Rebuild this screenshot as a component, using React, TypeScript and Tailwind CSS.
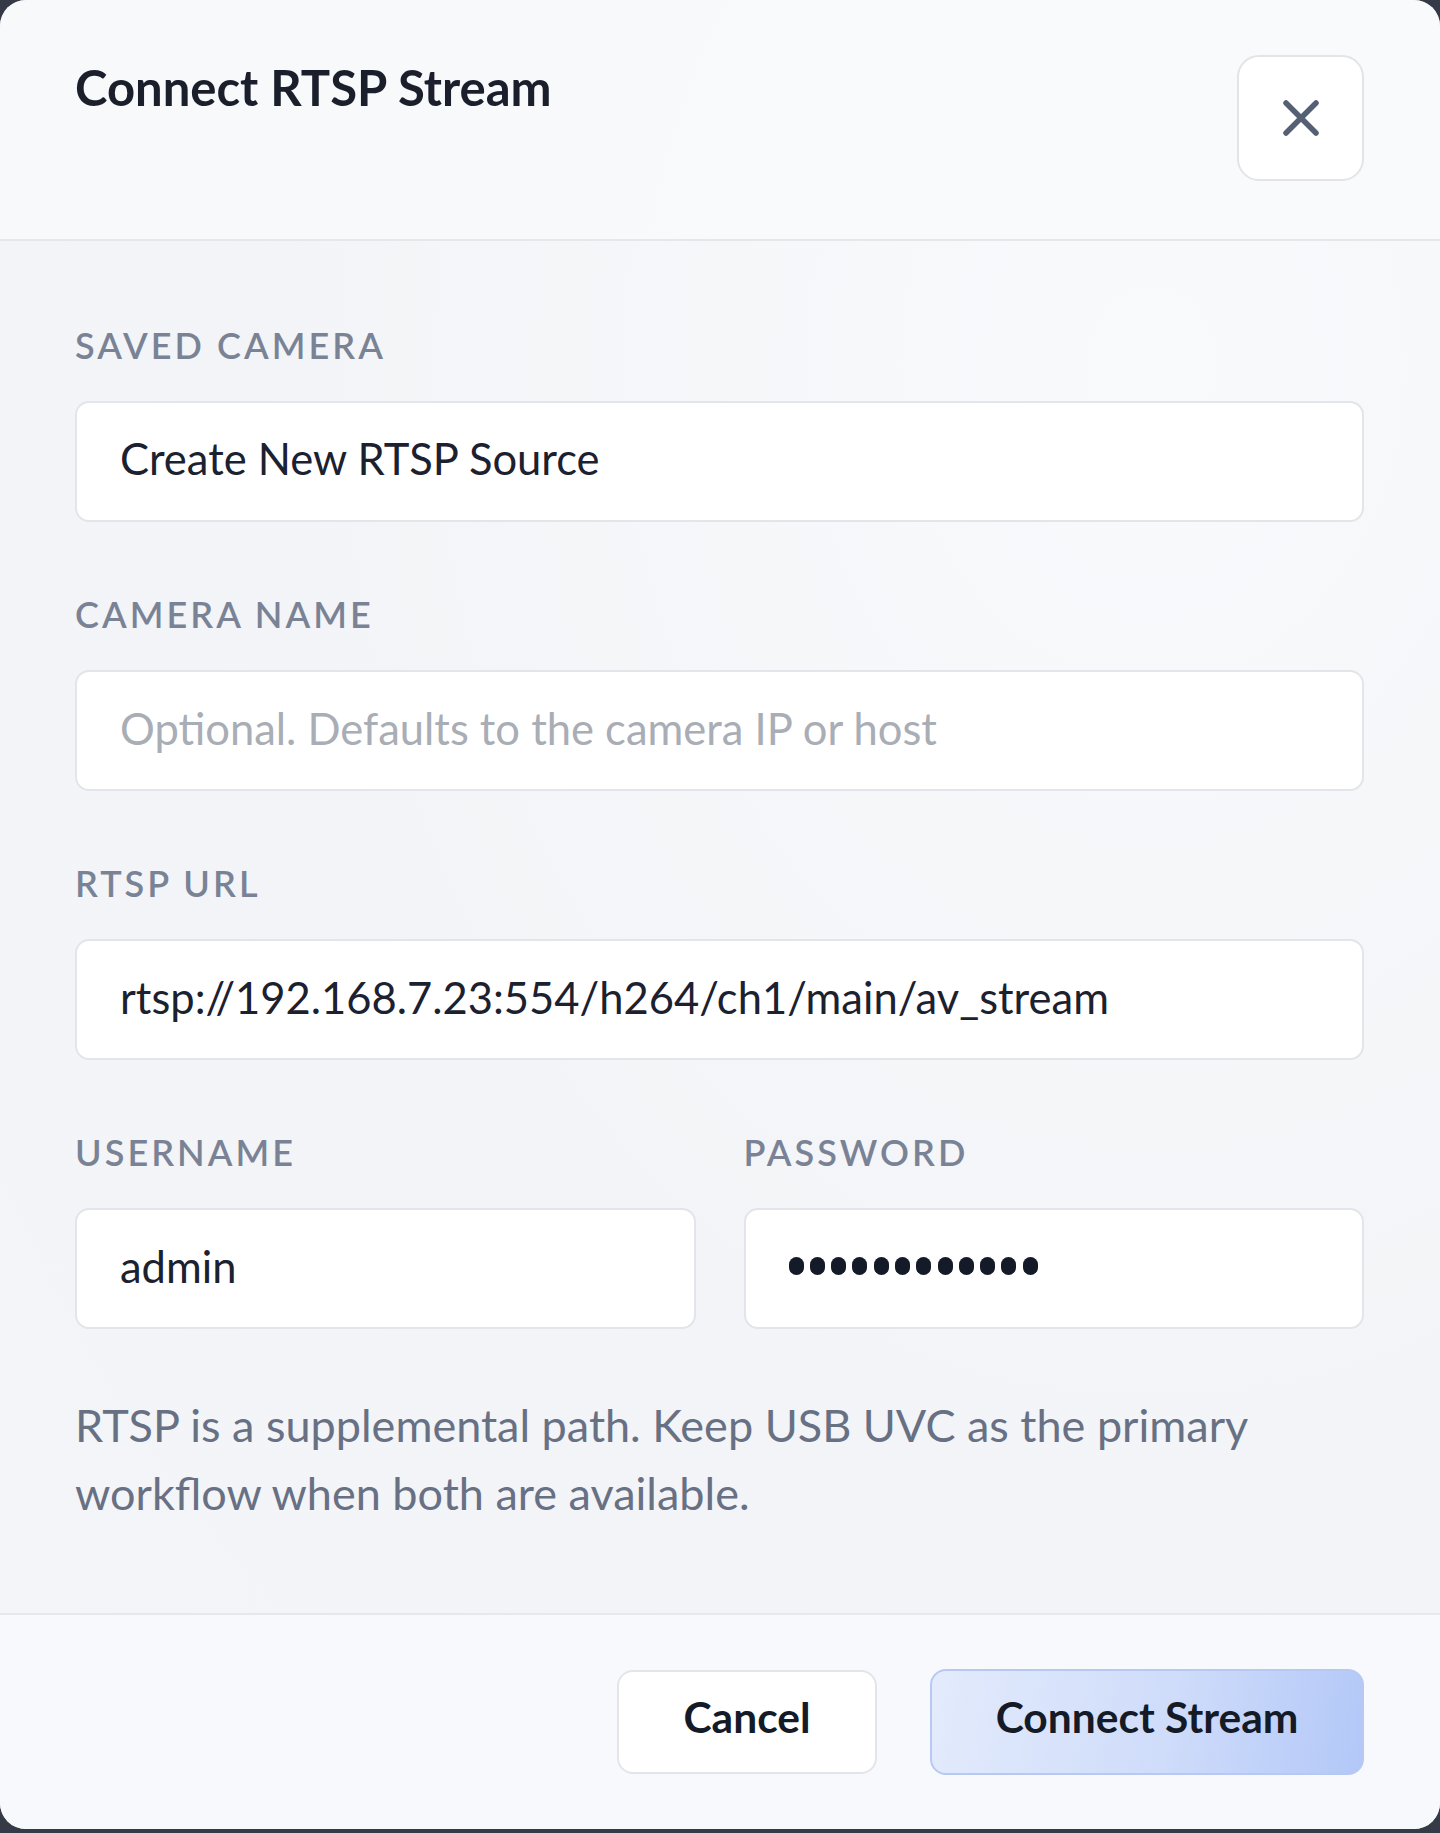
import React from "react";

type FieldProps = {
  label: string;
  children: React.ReactNode;
};

function Field({ label, children }: FieldProps) {
  return (
    <div className="flex flex-col">
      <label className="h-[40px] text-[36px] font-semibold uppercase leading-[40px] tracking-[0.085em] text-[#7a8395]">
        {label}
      </label>
      <div className="mt-[36px]">{children}</div>
    </div>
  );
}

const inputClass =
  "block h-[121px] w-full rounded-[14px] border-2 border-[#e2e5e9] bg-white px-[43px] pb-[6px] text-[43.5px] text-[#1c2130] outline-none placeholder:text-[#a9adb5]";

export default function App() {
  return (
    <div className="min-h-screen bg-[#343a46] font-['Lato',sans-serif]">
      <div className="flex h-[1829px] flex-col overflow-hidden rounded-[26px] bg-[radial-gradient(ellipse_at_80%_20%,#f9fafc_0%,#f2f4f7_55%,#f3f5f8_100%)]">
        {/* Header */}
        <header className="flex h-[241px] shrink-0 items-start justify-between border-b-2 border-[#e5e7eb] bg-[#f9fafb]/80 pl-[75px] pr-[76px] pt-[55px]">
          <h2 className="mt-[3px] text-[49px] font-bold leading-[58px] text-[#1a1f2b]">Connect RTSP Stream</h2>
          <button
            type="button"
            aria-label="Close"
            className="flex h-[126px] w-[127px] items-center justify-center rounded-[22px] border-2 border-[#e2e4e8] bg-white"
          >
            <svg width="38" height="38" viewBox="0 0 38 38" fill="none" stroke="#566075" strokeWidth="5.5" strokeLinecap="round">
              <path d="M4 4L34 34M34 4L4 34" />
            </svg>
          </button>
        </header>

        {/* Body */}
        <div className="flex flex-1 flex-col gap-[72px] pl-[75px] pr-[76px] pt-[84px]">
          <Field label="Saved Camera">
            <div className={inputClass + " flex items-center"}>Create New RTSP Source</div>
          </Field>

          <Field label="Camera Name">
            <input className={inputClass} placeholder="Optional. Defaults to the camera IP or host" />
          </Field>

          <Field label="RTSP URL">
            <input className={inputClass} defaultValue="rtsp://192.168.7.23:554/h264/ch1/main/av_stream" />
          </Field>

          <div className="grid grid-cols-2 gap-[48px]">
            <Field label="Username">
              <input className={inputClass} defaultValue="admin" />
            </Field>
            <Field label="Password">
              <div className={inputClass + " flex items-center gap-[6.3px]"}>
                {Array.from({ length: 12 }).map((_, i) => (
                  <span key={i} className="block h-[18px] w-[15px] rounded-full bg-[#141a28]" />
                ))}
              </div>
            </Field>
          </div>

          <p className="-mt-[10px] text-[45px] leading-[68px] text-[#687084]">
            RTSP is a supplemental path. Keep USB UVC as the primary workflow when both are available.
          </p>
        </div>

        {/* Footer */}
        <footer className="flex h-[216px] shrink-0 items-center justify-end gap-[53px] border-t-2 border-[#e6e8ec] bg-[#f7f9fc] pr-[76px]">
          <button
            type="button"
            className="h-[104px] w-[260px] rounded-[16px] border-2 border-[#e3e5e9] bg-white pb-[10px] text-[42.5px] font-bold text-[#141a26]"
          >
            Cancel
          </button>
          <button
            type="button"
            className="h-[106px] w-[434px] rounded-[16px] border-2 border-[#b7c9f3] bg-[linear-gradient(100deg,#e3ebfc_0%,#cfdcfa_55%,#b3c8f8_100%)] pb-[10px] text-[42.5px] font-bold text-[#141a26]"
          >
            Connect Stream
          </button>
        </footer>
      </div>
    </div>
  );
}
